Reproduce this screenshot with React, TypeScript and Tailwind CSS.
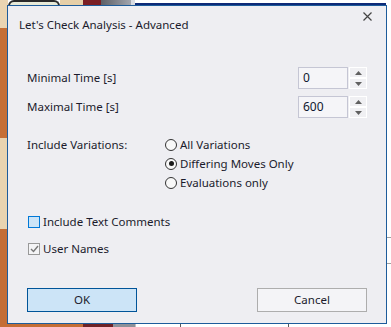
const font = { fontFamily: '"Noto Sans", "Open Sans", Arial, sans-serif' };

function Backdrop() {
  return (
    <>
      {/* left strip: chessboard squares behind the dialog */}
      <div className="absolute left-0 top-0 flex h-full w-[8px] flex-col">
        <div className="h-[28px] bg-[#ead5b2]" />
        <div className="h-[110px] bg-[#c56f36]" />
        <div className="h-[91px] bg-[#e9d4b0]" />
        <div className="flex-1 bg-[#c46d35]" />
      </div>
      {/* top strip */}
      <div className="absolute left-0 top-0 flex h-[6px] w-full">
        <div className="w-[8px] bg-[#ead5b2]" />
        <div className="w-[52px] rounded-t-full border-x-2 border-t-2 border-[#2a2a2a] bg-[#e8ead8]" />
        <div className="w-[23px] bg-[#e6cfa8]" />
        <div className="w-[18px] bg-[#7a1e24]" />
        <div className="w-[30px] bg-gradient-to-r from-[#5d5f66] to-[#a3a6ae]" />
        <div className="w-[4px] bg-[#d8dbe2]" />
        <div className="flex flex-1 flex-col">
          <div className="h-[3px] bg-white" />
          <div className="h-[2px] bg-[#0d2a78]" />
          <div className="flex-1 bg-white" />
        </div>
      </div>
      {/* right strip */}
      <div className="absolute right-0 top-0 flex h-full w-[5px] flex-col bg-white">
        <div className="h-[237px]" />
        <div className="h-px bg-[#a0a0a0]" />
        <div className="h-[25px]" />
        <div className="h-px bg-[#a0a0a0]" />
      </div>
      {/* bottom strip */}
      <div className="absolute bottom-0 left-0 flex h-[4px] w-full">
        <div className="w-[83px] bg-[#c46d35]" />
        <div className="w-[30px] bg-[#6e2227]" />
        <div className="w-[22px] bg-[#8d9098]" />
        <div className="w-[45px] border-l border-[#c0c0c0] bg-white" />
        <div className="w-[109px] border-x border-[#5a5a5a] bg-white" />
        <div className="flex-1 bg-white" />
      </div>
    </>
  );
}

function Spin({ value }: { value: string }) {
  return (
    <div className="flex h-[22px]">
      <div className="flex w-[50px] items-center border border-[#c5c6d4] bg-[#f5f5f8] pl-[4px] text-[12px] text-[#101830]">
        {value}
      </div>
      <div className="ml-px flex w-[18px] flex-col">
        <div className="flex h-[11px] items-center justify-center border border-white bg-[#f0f0f3]">
          <svg width="7" height="4" viewBox="0 0 7 4">
            <path d="M3.5 0 L7 4 L0 4 Z" fill="#606060" />
          </svg>
        </div>
        <div className="flex h-[11px] items-center justify-center border border-white bg-[#f0f0f3]">
          <svg width="7" height="4" viewBox="0 0 7 4">
            <path d="M0 0 L7 0 L3.5 4 Z" fill="#606060" />
          </svg>
        </div>
      </div>
    </div>
  );
}

function Radio({ label, checked }: { label: string; checked?: boolean }) {
  return (
    <div className="flex h-[19px] items-center gap-[3px]">
      <div className="flex h-[12px] w-[12px] items-center justify-center rounded-full border border-[#333333] bg-[#f8f8f8]">
        {checked && <div className="h-[5px] w-[5px] rounded-full bg-[#1a1a1a]" />}
      </div>
      <span>{label}</span>
    </div>
  );
}

export default function App() {
  return (
    <div className="relative h-[327px] w-[391px] overflow-hidden bg-white" style={font}>
      <Backdrop />
      <div className="absolute left-[7px] top-[5px] flex h-[319px] w-[380px] flex-col border border-[#1d5c9b] bg-[#eeeef2] text-[11.5px] text-[#1b1b2c]">
        {/* Title bar */}
        <div className="flex h-[36px] items-center pl-[11px] pt-[2px]">
          <span>Let's Check Analysis - Advanced</span>
          <svg className="mb-[17px] ml-auto mr-[14px]" width="9" height="9" viewBox="0 0 9 9">
            <path d="M0.5 0.5 L8.5 8.5 M8.5 0.5 L0.5 8.5" stroke="#444" strokeWidth="1.2" />
          </svg>
        </div>

        <div className="flex flex-col pl-[19px] pr-[19px]">
          {/* time rows */}
          <div className="mt-[25px] flex items-center justify-between">
            <span>Minimal Time [s]</span>
            <Spin value="0" />
          </div>
          <div className="mt-[7px] flex items-center justify-between">
            <span>Maximal Time [s]</span>
            <Spin value="600" />
          </div>

          {/* variations */}
          <div className="mt-[17px] flex">
            <div className="flex h-[19px] w-[138px] items-center">Include Variations:</div>
            <div className="flex flex-col">
              <Radio label="All Variations" />
              <Radio label="Differing Moves Only" checked />
              <Radio label="Evaluations only" />
            </div>
          </div>

          {/* checkboxes */}
          <div className="mt-[20px] flex h-[19px] items-center gap-[3px]">
            <div className="ml-px h-[12px] w-[12px] border border-[#0078d7] bg-[#cce4f7]" />
            <span>Include Text Comments</span>
          </div>
          <div className="mt-[8px] flex h-[19px] items-center gap-[3px]">
            <div className="ml-px flex h-[12px] w-[12px] items-center justify-center border border-[#999999] bg-[#f4f4f6]">
              <svg width="9" height="8" viewBox="0 0 9 8">
                <path d="M1 4 L3.5 6.5 L8 1" fill="none" stroke="#777" strokeWidth="1.4" />
              </svg>
            </div>
            <span>User Names</span>
          </div>

          {/* buttons */}
          <div className="mt-[30px] flex justify-between">
            <button className="h-[24px] w-[110px] border border-[#005499] bg-[#cce4f7] text-[11.5px] text-[#1b1b2c]">
              OK
            </button>
            <button className="h-[24px] w-[110px] border border-[#adadad] bg-[#f4f4f7] text-[11.5px] text-[#1b1b2c]">
              Cancel
            </button>
          </div>
        </div>
      </div>
    </div>
  );
}
